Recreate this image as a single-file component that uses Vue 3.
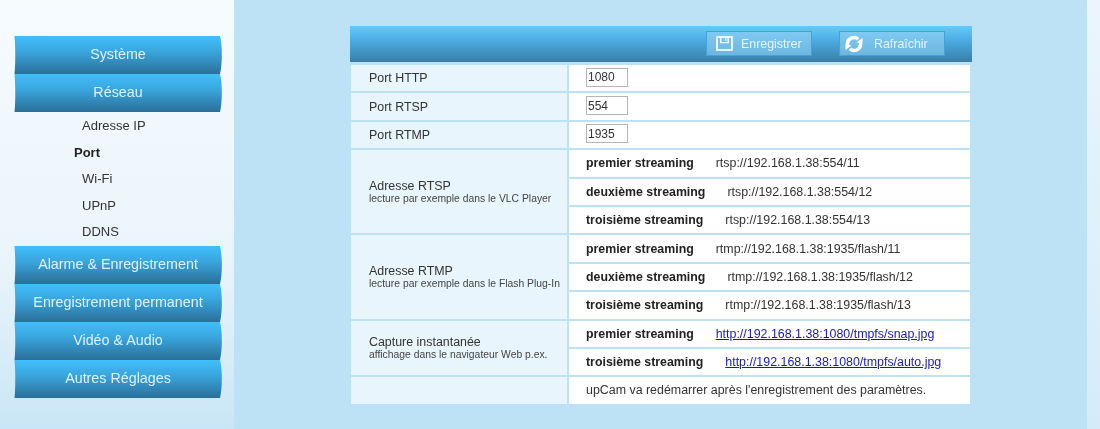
<script setup>
const subItems = [
  { label: 'Adresse IP' },
  { label: 'Port', active: true },
  { label: 'Wi-Fi' },
  { label: 'UPnP' },
  { label: 'DDNS' }
]
const after = ['Alarme & Enregistrement', 'Enregistrement permanent', 'Vidéo & Audio', 'Autres Réglages']
const ports = [
  ['Port HTTP', '1080'],
  ['Port RTSP', '554'],
  ['Port RTMP', '1935']
]
const groups = [
  {
    title: 'Adresse RTSP',
    sub: 'lecture par exemple dans le VLC Player',
    rows: [
      ['premier streaming', 'rtsp://192.168.1.38:554/11', 22],
      ['deuxième streaming', 'rtsp://192.168.1.38:554/12', 22],
      ['troisième streaming', 'rtsp://192.168.1.38:554/13', 22]
    ]
  },
  {
    title: 'Adresse RTMP',
    sub: 'lecture par exemple dans le Flash Plug-In',
    rows: [
      ['premier streaming', 'rtmp://192.168.1.38:1935/flash/11', 22],
      ['deuxième streaming', 'rtmp://192.168.1.38:1935/flash/12', 22],
      ['troisième streaming', 'rtmp://192.168.1.38:1935/flash/13', 22]
    ]
  },
  {
    title: 'Capture instantanée',
    sub: 'affichage dans le navigateur Web p.ex.',
    link: true,
    rows: [
      ['premier streaming', 'http://192.168.1.38:1080/tmpfs/snap.jpg', 22],
      ['troisième streaming', 'http://192.168.1.38:1080/tmpfs/auto.jpg', 22]
    ]
  }
]
</script>

<template>
  <div class="page">
    <aside class="side">
      <nav class="menu">
        <a class="mbtn">Système</a>
        <a class="mbtn">Réseau</a>
        <ul class="sub">
          <li v-for="s in subItems" :key="s.label" :class="{ active: s.active }">{{ s.label }}</li>
        </ul>
        <a v-for="m in after" :key="m" class="mbtn">{{ m }}</a>
      </nav>
    </aside>
    <main class="main">
      <div class="panel">
        <div class="bar">
          <button class="tbtn">
            <svg width="17" height="15" viewBox="0 0 17 15" fill="none" stroke="#f4fbff" stroke-width="1.8">
              <rect x="1" y="1" width="15" height="13" />
              <path d="M4.8 1v5.6h7.4V1" stroke-width="1.4" />
              <path d="M9.8 2.2v2.6" stroke-width="1.3" />
            </svg>
            <span>Enregistrer</span>
          </button>
          <button class="tbtn refresh">
            <svg width="20" height="18" viewBox="0 0 20 18" fill="#fff">
              <path d="M3.6 10a6.4 6.4 0 0 1 10.6-5.8" fill="none" stroke="#fff" stroke-width="3.4" />
              <path d="M16.4 8a6.4 6.4 0 0 1-10.6 5.8" fill="none" stroke="#fff" stroke-width="3.4" />
              <path d="M12.6 7.6L18.6 8.8 18.4 3z" />
              <path d="M7.4 10.4L1.4 9.2 1.6 15z" />
            </svg>
            <span>Rafraîchir</span>
          </button>
        </div>
        <table class="tbl">
          <tbody>
            <tr v-for="p in ports" :key="p[0]">
              <td class="lab">{{ p[0] }}</td>
              <td class="val"><input class="inp" :value="p[1]" /></td>
            </tr>
            <template v-for="g in groups" :key="g.title">
              <tr v-for="(r, i) in g.rows" :key="r[0]">
                <td v-if="i === 0" class="lab" :rowspan="g.rows.length">
                  <div>{{ g.title }}</div>
                  <div class="small">{{ g.sub }}</div>
                </td>
                <td class="val">
                  <b class="st">{{ r[0] }}</b>
                  <a v-if="g.link" class="lnk" :style="{ marginLeft: r[2] + 'px' }">{{ r[1] }}</a>
                  <span v-else :style="{ marginLeft: r[2] + 'px' }">{{ r[1] }}</span>
                </td>
              </tr>
            </template>
            <tr>
              <td class="lab"></td>
              <td class="val">upCam va redémarrer après l'enregistrement des paramètres.</td>
            </tr>
          </tbody>
        </table>
      </div>
    </main>
    <div class="edge"></div>
  </div>
</template>

<style>
html, body { margin: 0; padding: 0; }
</style>

<style scoped>
.page {
  display: flex;
  width: 1100px;
  height: 429px;
  overflow: hidden;
  font-family: "Liberation Sans", Arial, sans-serif;
  color: #333;
  filter: blur(0.3px);
}
.side {
  width: 234px;
  flex: none;
  padding: 36px 0 0 14px;
  box-sizing: border-box;
  background: linear-gradient(#f6fbfe, #eaf5fb 60%, #c9e6f6);
}
.menu { width: 208px; display: flex; flex-direction: column; }
.mbtn {
  display: block;
  height: 38px;
  line-height: 36px;
  text-align: center;
  font-size: 14.3px;
  color: #dcf2fd;
  background: linear-gradient(#40bffb, #3aa6de 40%, #2a6f98);
  clip-path: path('M0.5 0 H206 C208.5 10 208.5 28 206 38 H0.5 C1.5 28 1.5 12 0.5 0 Z');
}
.sub { list-style: none; margin: 0; padding: 1px 0 0; }
.sub li {
  height: 26.6px;
  line-height: 26.6px;
  padding-left: 68px;
  font-size: 13px;
  color: #333;
}
.sub li.active { padding-left: 60px; font-weight: bold; color: #222; }
.main {
  width: 853px;
  flex: none;
  background: #bde1f5;
  padding: 26px 0 0 116px;
  box-sizing: border-box;
}
.edge { flex: 1; background: linear-gradient(#eaf6fc, #d5ecf8); }
.panel { width: 622px; }
.bar {
  height: 36px;
  display: flex;
  align-items: center;
  justify-content: flex-end;
  gap: 27px;
  padding: 0 27px 1px 0;
  box-sizing: border-box;
  background: linear-gradient(#63cbff, #48a4d8 50%, #3a7ea8);
}
.tbtn {
  width: 106px;
  height: 25px;
  display: flex;
  align-items: center;
  gap: 8px;
  padding: 0 0 0 9px;
  box-sizing: border-box;
  border: 1px solid #4a9fd6;
  background: linear-gradient(#7fcaf2, #6cb6e0);
  color: #e4f5fd;
  font-family: inherit;
  font-size: 12.4px;
}
.refresh { padding-left: 4px; gap: 10px; }
.tbl {
  width: 619px;
  margin: 1px 0 0 1px;
  border-collapse: collapse;
  table-layout: fixed;
  font-size: 12.42px;
}
.tbl td {
  height: 26.4px;
  padding: 0;
  border: 2px solid #bde1f5;
  border-left: 0;
  border-right: 0;
}
.lab {
  width: 217px;
  padding-left: 18px !important;
  box-sizing: border-box;
  background: #e8f5fc;
  border-right: 2px solid #bde1f5 !important;
}
.val {
  padding-left: 17px !important;
  background: #fff;
}
.small { font-size: 10.35px; color: #444; }
.st { color: #222; font-size: 12.35px; }
.lnk { color: #1a1ab8; text-decoration: underline; }
.inp {
  width: 42px;
  height: 19px;
  box-sizing: border-box;
  display: block;
  margin-bottom: 2px;
  padding: 0 1px;
  border: 1px solid #b5b5b5;
  font-family: inherit;
  font-size: 12px;
  color: #333;
  background: #fff;
  outline: none;
}
</style>
